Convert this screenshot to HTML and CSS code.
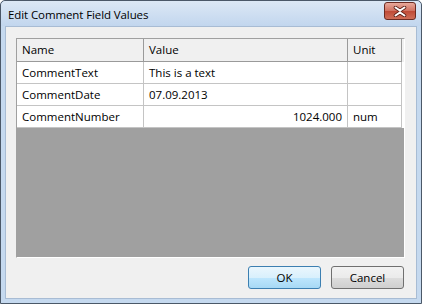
FILE: index.html
```html
<!DOCTYPE html>
<html lang="en">
<head>
    <meta charset="UTF-8">
    <title>Edit Comment Field Values</title>
    <link rel="stylesheet" href="styles.css">
</head>
<body>
<div class="window">
    <div class="titlebar">
        <span class="title">Edit Comment Field Values</span>
        <div class="close">
            <svg width="16" height="11" viewBox="0 0 16 11">
                <path d="M3.5 1.5 L8 4.5 L12.5 1.5 M3.5 9.5 L8 6.5 L12.5 9.5" fill="none" stroke="#5a2018" stroke-width="3.6" stroke-linecap="round"/>
                <path d="M3.5 1.5 L8 4.5 L12.5 1.5 M3.5 9.5 L8 6.5 L12.5 9.5" fill="none" stroke="#fff" stroke-width="2" stroke-linecap="round"/>
            </svg>
        </div>
    </div>
    <div class="client">
        <div class="grid">
            <div class="row head">
                <div class="cell">Name</div>
                <div class="cell">Value</div>
                <div class="cell">Unit</div>
            </div>
            <div class="row">
                <div class="cell">CommentText</div>
                <div class="cell">This is a text</div>
                <div class="cell"></div>
            </div>
            <div class="row">
                <div class="cell">CommentDate</div>
                <div class="cell">07.09.2013</div>
                <div class="cell"></div>
            </div>
            <div class="row">
                <div class="cell">CommentNumber</div>
                <div class="cell num">1024.000</div>
                <div class="cell">num</div>
            </div>
        </div>
        <div class="buttons">
            <button class="btn default">OK</button>
            <button class="btn">Cancel</button>
        </div>
    </div>
</div>
</body>
</html>
```

FILE: styles.css
```css
body {
    margin: 0;
    font-family: "Open Sans", "Noto Sans", sans-serif;
    font-size: 11.5px;
    color: #000;
}
.window {
    width: 422px;
    height: 304px;
    box-sizing: border-box;
    border: 1px solid #4b5868;
    border-radius: 5px 5px 0 0;
    background: #c5d9ef;
    display: flex;
    flex-direction: column;
    padding: 0 4px 4px 4px;
}
.titlebar {
    height: 25px;
    display: flex;
    align-items: center;
    justify-content: space-between;
    margin: 0 -4px;
    padding: 0 5px 0 7px;
    background: linear-gradient(#dce8f5, #c2d6ee);
    border-radius: 5px 5px 0 0;
}
.title {
    font-size: 11.5px;
    letter-spacing: -0.1px;
    margin-top: 1px;
}
.close {
    width: 30px;
    height: 16px;
    margin-top: -5px;
    border: 1px solid #6b2b22;
    border-radius: 3px;
    background: linear-gradient(#e9a99b, #d0705f 50%, #bf4a36 51%, #cf6e58);
    display: flex;
    align-items: center;
    justify-content: center;
}
.client {
    flex: 1;
    background: #f0f0f0;
    border: 1px solid #a8bcd4;
    display: flex;
    flex-direction: column;
    padding: 11px 11px 0 10px;
}
.grid {
    width: 389px;
    height: 220px;
    box-sizing: border-box;
    border: 1px solid;
    border-color: #a0a0a0 #ffffff #ffffff #a0a0a0;
    background: #a0a0a0;
}
.row {
    display: grid;
    grid-template-columns: 127px 204px 54px;
    height: 22px;
    background: #fff;
}
.row.head {
    height: 23px;
    background: #f0f0f0;
}
.cell {
    box-sizing: border-box;
    border-right: 1px solid #c4c4c4;
    border-bottom: 1px solid #c4c4c4;
    padding: 0 5px;
    line-height: 21px;
    white-space: nowrap;
}
.head .cell {
    border-color: #9a9a9a;
    line-height: 22px;
}
.cell.num {
    text-align: right;
}
.buttons {
    display: flex;
    justify-content: flex-end;
    gap: 10px;
    margin-top: 8px;
    margin-right: 1px;
}
.btn {
    width: 73px;
    height: 23px;
    font-family: inherit;
    font-size: 11.5px;
    border: 1px solid #707070;
    border-radius: 3px;
    background: linear-gradient(#f2f2f2, #ebebeb 50%, #dddddd 51%, #cfcfcf);
    padding: 0;
}
.btn.default {
    border-color: #3c7fb1;
    background: linear-gradient(#eaf6fd, #d9f0fc 50%, #bee6fd 51%, #a7d9f5);
}
```
